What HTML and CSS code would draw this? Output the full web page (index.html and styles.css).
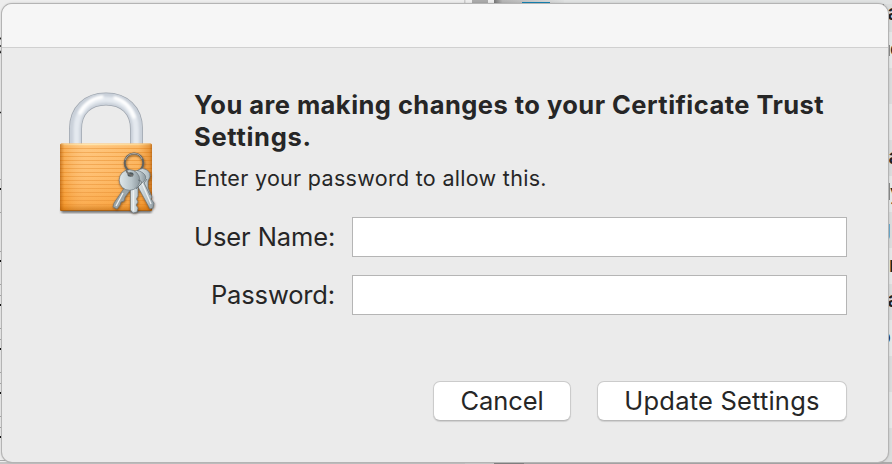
FILE: index.html
```html
<!DOCTYPE html>
<html lang="en">
<head>
<meta charset="utf-8">
<title>Certificate Trust Settings</title>
<link rel="stylesheet" href="styles.css">
</head>
<body>
<svg class="backdrop" width="892" height="464" viewBox="0 0 892 464" aria-hidden="true">
  <defs>
    <pattern id="rows" y="32" width="892" height="72" patternUnits="userSpaceOnUse">
      <rect width="892" height="36" fill="#e5e7e7"/><rect y="36" width="892" height="36" fill="#dadcdc"/>
    </pattern>
    <linearGradient id="edge"><stop stop-color="#777"/><stop offset=".12" stop-color="#b5b5b5"/><stop offset="1" stop-color="#dddfdf"/></linearGradient>
  </defs>
  <rect width="494" height="464" fill="#ededed"/>
  <rect x="494" width="398" height="464" fill="url(#rows)"/>
  <rect x="494" width="398" height="4" fill="#e0e2e2"/>
  <rect x="494" width="70" height="4" fill="url(#edge)"/>
  <rect x="472" width="16" height="5" fill="#aaa"/>
  <rect x="464" width="1.500" height="5" fill="#ccc"/>
  <rect x="522" y="2" width="28" height="3" fill="#1684b4"/>
  <path d="M655 3.500h2M678 3.500h2M692 3.500h2M772 3.500h2M790 3.500h2M804 3.500h2M881 4.500h3" stroke="#555"/>
  <path d="M0 38q2 1 2 4M0 46h2M0 53l2-3M0 112.500h2" stroke="#222" stroke-width="1.500" fill="none"/>
  <path d="M0 189h2M0 261h2M0 305h2M0 349h2M0 393h2M0 437h2" stroke="#111" stroke-width="2"/>
  <path d="M0 179.500h2M0 212.500h2M0 251.500h2M0 284.500h2M0 295.500h2M0 328.500h2M0 339.500h2M0 372.500h2M0 383.500h2M0 416.500h2M0 427.500h2M0 460.500h8" stroke="#aaa"/>
  <g class="backdrop-text">
    <text x="887.500" y="20">a</text><text x="890" y="56">c</text>
    <text x="888.500" y="164">a</text><text x="890" y="200">y</text>
    <text x="877.500" y="236">g</text><text x="889" y="272">r</text>
    <text x="887.500" y="307">a</text><text x="878" y="344">o</text>
  </g>
  <path d="M889 45v11M889 183v17" stroke="#333"/>
  <rect y="462" width="465" height="2" fill="#c5c5c5"/>
  <rect x="465" y="462" width="29" height="2" fill="#cecece"/>
  <rect x="494" y="462" width="398" height="2" fill="#aaa"/>
  <rect x="494" y="462" width="30" height="2" fill="#858585"/>
</svg>
<main class="dialog">
  <div class="titlebar"></div>
  <div class="content">
    <svg class="lock" width="120" height="140" viewBox="50 85 120 140" aria-label="Locked">
      <defs>
        <linearGradient id="brass" x2="0" y2="1"><stop stop-color="#ffc274"/><stop offset=".5" stop-color="#ffba65"/><stop offset=".9" stop-color="#fba642"/><stop offset="1" stop-color="#d07715"/></linearGradient>
        <linearGradient id="side"><stop stop-color="#a85200" stop-opacity=".65"/><stop offset=".05" stop-color="#e27d0e" stop-opacity=".25"/><stop offset=".3" stop-color="#fff" stop-opacity=".08"/><stop offset=".85" stop-color="#e27d0e" stop-opacity=".12"/><stop offset=".97" stop-color="#cc6600" stop-opacity=".45"/><stop offset="1" stop-color="#a85200" stop-opacity=".7"/></linearGradient>
        <linearGradient id="steel"><stop stop-color="#dfe7ea"/><stop offset=".6" stop-color="#b9c5ca"/><stop offset="1" stop-color="#8d999f"/></linearGradient>
        <filter id="soft" x="-20%" y="-20%" width="140%" height="140%"><feGaussianBlur stdDeviation="1.300"/></filter>
        <filter id="shade" x="-30%" y="-30%" width="160%" height="160%"><feDropShadow dx="0.500" dy="1" stdDeviation="0.900" flood-color="#382000" flood-opacity=".6"/></filter>
      </defs>
      <rect x="61" y="208" width="91" height="5" rx="2" fill="#777" filter="url(#soft)"/>
      <g fill="none">
        <path d="M75.500 145V129C75.500 110 88 99 106 99S136.500 110 136.500 129V145" stroke="#9ea5ae" stroke-width="13"/>
        <path d="M75.500 145V129C75.500 110 88 99 106 99S136.500 110 136.500 129V145" stroke="#c9d0d9" stroke-width="11.500"/>
        <path d="M76.500 145V129C76.500 111 89 99.500 106 99.500S136 111 136 129V145" stroke="#e4e9ef" stroke-width="6" filter="url(#soft)"/>
        <path d="M80 113Q87 99.500 102 97M115 98Q129 102 134 117" stroke="#fff" stroke-width="3.500" stroke-linecap="round" filter="url(#soft)"/>
      </g>
      <rect x="60" y="143.500" width="92" height="67.500" rx="1.500" fill="url(#brass)"/>
      <path d="M60 148.500h92M60 152.500h92M60 156.500h92M60 160.500h92M60 164.500h92M60 168.500h92M60 172.500h92M60 176.500h92M60 180.500h92M60 184.500h92M60 188.500h92M60 192.500h92M60 196.500h92M60 200.500h92M60 204.500h92" stroke="#e88d2a" stroke-opacity=".55"/>
      <path d="M61 144.500h90" stroke="#ffe3a6" stroke-width="1.500"/>
      <rect x="60" y="143.500" width="92" height="67.500" rx="1.500" fill="url(#side)"/>
      <path d="M61 210.500h90" stroke="#a96113"/>
      <g filter="url(#shade)">
        <ellipse cx="134" cy="163" rx="9.300" ry="9.500" fill="none" stroke="#62625e" stroke-width="2"/>
        <path d="M125 160Q128 153.500 134 153.500T142 159" fill="none" stroke="#b0aaa0" stroke-width="1"/>
        <g stroke="#606a70" stroke-width=".6" stroke-linejoin="round">
          <path d="M138 170Q143 167 147 170Q151 173 150 177L148 181 148 188 152 197 151 199 154 203 153 208 150 209 137 185Z" fill="url(#steel)"/>
          <path d="M130 173Q137 168 143 173Q148 177 144 181L138 187 138 196 136.500 199 138 202 136 205 138 208 137 212 133 213 130.500 210V186Z" fill="url(#steel)"/>
          <path d="M125 187L131 189 125 197 124 201 121 202 120 205 117 209 113 207 114 203Z" fill="#9ca6a9"/>
          <circle cx="129.500" cy="180" r="10.300" fill="url(#steel)"/>
        </g>
        <path d="M133.500 190V211M142 183L151 204M123 193L116 206" stroke="#eef1f1" stroke-width="1.300" fill="none"/>
        <path d="M138 180Q143 181 141 184L136 189M147 179L144 183L150 195" stroke="#626c70" stroke-width=".8" fill="none"/>
        <ellipse cx="130.500" cy="174.500" rx="3" ry="2.200" fill="#4e585c"/>
        <path d="M126 170Q128 175 133 175.500" fill="none" stroke="#6f706e" stroke-width="1.800"/>
      </g>
    </svg>
    <form class="details">
      <h1><span class="line-one">You are making changes to your Certificate Trust</span> <span class="line-two">Settings.</span></h1>
      <p>Enter your password to allow this.</p>
      <div class="fields">
        <label class="user" for="user">User Name:</label><input id="user" type="text">
        <label for="password">Password:</label><input id="password" type="password">
      </div>
      <div class="actions">
        <button class="cancel" type="button">Cancel</button>
        <button class="update" type="button">Update Settings</button>
      </div>
    </form>
  </div>
</main>
</body>
</html>
```
FILE: styles.css
```css
* { box-sizing: border-box; }
body {
  margin: 0;
  width: 892px;
  height: 464px;
  overflow: hidden;
  padding: 4px 4px 2px 2px;
  background: #ddd;
  color: #262626;
  font-family: Inter, "Liberation Sans", sans-serif;
}
.backdrop { position: absolute; inset: 0; }
.backdrop-text { font: 600 21px Inter, sans-serif; fill: #222; }
.dialog {
  position: relative;
  width: 886px;
  height: 458px;
  border-radius: 10px;
  background: #ebebeb;
  box-shadow: 0 0 0 1px #b4b4b4, 0 0 3px rgba(0, 0, 0, .35);
  overflow: hidden;
}
.titlebar {
  height: 44px;
  background: #f6f6f6;
  border-bottom: 1px solid #d0d0d0;
}
.content { display: flex; padding: 37px 41px 0 48px; }
.lock { flex: none; }
.details { width: 653px; margin-left: 24px; }
h1 {
  margin: 4px 0 0;
  font-size: 25.5px;
  font-weight: 700;
  line-height: 32px;
  letter-spacing: .46px;
  white-space: nowrap;
}
h1 span { display: block; }
.line-two { letter-spacing: .7px; }
p { margin: 12px 0 0; font-size: 21.5px; line-height: 26px; letter-spacing: .3px; white-space: nowrap; }
.fields {
  display: grid;
  grid-template-columns: 142px 495px;
  column-gap: 16px;
  row-gap: 18px;
  margin-top: 26px;
}
label {
  padding-right: 1px;
  font-size: 25.5px;
  line-height: 40px;
  letter-spacing: -.15px;
  text-align: right;
  white-space: nowrap;
}
.user { letter-spacing: -.08px; }
input {
  width: 495px;
  height: 40px;
  border: 1px solid #b5b5b5;
  border-radius: 0;
  background: #fff;
  outline: 0;
}
.actions { display: flex; justify-content: flex-end; gap: 26px; margin-top: 66px; }
button {
  height: 40px;
  padding: 0;
  border: 1px solid #cbcbcb;
  border-bottom-color: #b8b8b8;
  border-radius: 7px;
  background: #fff;
  color: inherit;
  font: 400 25.5px/36px Inter, "Liberation Sans", sans-serif;
  box-shadow: 0 1px 1px rgba(0, 0, 0, .12);
  white-space: nowrap;
}
.cancel { width: 138px; letter-spacing: -.1px; }
.update { width: 250px; letter-spacing: .2px; }
```
